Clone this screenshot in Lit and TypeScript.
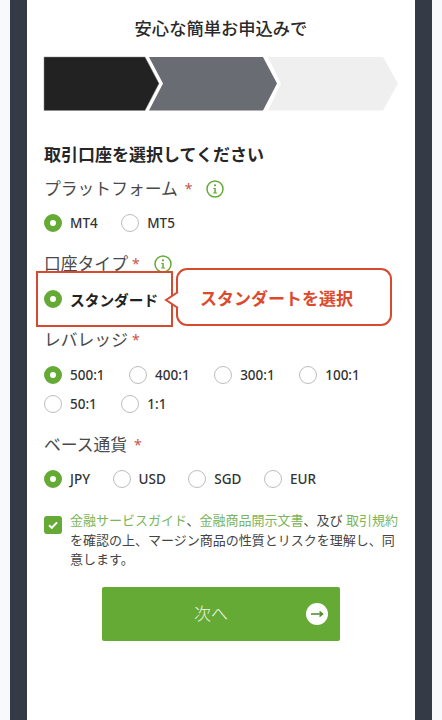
import { LitElement, html, css, svg } from "lit";
import { customElement } from "lit/decorators.js";

const info = html`<svg class="info" viewBox="0 0 18 18" aria-hidden="true">
  <circle cx="9" cy="9" r="8" fill="none" stroke="#64aa35" stroke-width="1.5"></circle>
  <circle cx="9" cy="5.3" r="1.1" fill="#64aa35"></circle>
  <path d="M7.3 7.9H9.8V12.4H11V13.5H7.1V12.4H8.3V9H7.3Z" fill="#64aa35"></path>
</svg>`;

type Opt = { t: string; on?: boolean };

@customElement("app-root")
export class AppRoot extends LitElement {
  static styles = css`
    :host { display: block; height: 720px; background: #f7f9fc; padding: 0 10px; box-sizing: border-box;
      font-family: "Noto Sans", "Noto Sans CJK JP", sans-serif; color: #333; }
    .band { background: #343a46; padding: 0 17px; height: 720px; }
    .panel { background: #fff; height: 720px; padding: 19px 17px 0; box-sizing: border-box; display: flex; flex-direction: column; overflow: hidden; }
    .title { height: 20px; line-height: 20px; text-align: center; font-size: 17.3px; font-weight: 500; color: #2a2a2a; }
    .steps { display: block; width: 356px; height: 55px; margin: 17px 0 0 -1px; flex: none; }
    .heading { margin-top: 32px; height: 24px; line-height: 24px; font-size: 17px; font-weight: 700; color: #262626; white-space: nowrap; }
    .label { display: flex; align-items: center; height: 24px; box-sizing: border-box; padding-top: 2px; line-height: 22px; font-size: 16.8px; color: #4a4a4a; white-space: pre; }
    .star { color: #c9544f; font-size: 14px; margin-left: 4px; }
    .star.wide { margin-left: 7px; }
    .info { width: 18px; height: 18px; flex: none; margin-left: 14px; }
    .radios { display: flex; flex-wrap: wrap; column-gap: 24.5px; row-gap: 5px; }
    .radios.tight { column-gap: 23.5px; }
    .radios.cur { column-gap: 22.5px; }
    .radio { display: flex; align-items: center; gap: 8px; height: 24px; font-size: 13.5px; font-weight: 500; color: #333; }
    .radio span { padding-bottom: 1px; }
    .dot { width: 18px; height: 18px; box-sizing: border-box; border-radius: 50%; border: 1px solid #bdbdbd; background: #fff; flex: none; }
    .dot.on { border: 6px solid #64aa35; }
    .m9 { margin-top: 9px; } .m11 { margin-top: 11px; } .m12 { margin-top: 12px; } .m16 { margin-top: 16px; }
    .typerow { display: flex; align-items: flex-start; margin: -4px 0 0 -8px; height: 56px; flex: none; }
    .box { width: 137px; height: 56px; box-sizing: border-box; border: 2px solid #d64a30; display: flex; align-items: center; padding-left: 6px; gap: 8px; font-size: 14.7px; font-weight: 700; color: #222; white-space: nowrap; }
    .callout { position: relative; margin: -3px 0 0 3px; width: 216px; height: 58px; box-sizing: border-box; border: 2px solid #d64a30; border-radius: 11px; display: flex; align-items: center; padding-left: 22px; font-size: 17px; font-weight: 700; color: #dc4a2e; background: #fff; white-space: nowrap; }
    .tail { position: absolute; left: -14px; top: 20px; width: 16px; height: 20px; }
    .agree { display: flex; gap: 8px; margin-top: 20px; }
    .check { width: 18px; height: 18px; margin-top: 5px; border-radius: 3px; background: #64aa35; flex: none; display: flex; align-items: center; justify-content: center; }
    .check svg { width: 10px; height: 8px; }
    .agree p { margin: 0; width: 329px; font-size: 13px; line-height: 19.5px; color: #444; flex: none; }
    .agree a { color: #7ab55c; text-decoration: none; }
    .next { margin: 17.5px 0 0 58px; width: 238px; height: 54px; flex: none; background: #64aa35; border-radius: 2px; display: flex; align-items: center; padding: 0 12px 0 14px; box-sizing: border-box; color: #eef6e8; font-size: 17px; font-weight: 300; }
    .next span { flex: 1; text-align: center; padding-bottom: 3px; }
    .next svg { width: 22px; height: 22px; flex: none; }
  `;

  private radios(opts: Opt[], cls = "m11") {
    return html`<div class="radios ${cls}">
      ${opts.map((o) => html`<div class="radio"><i class="dot ${o.on ? "on" : ""}"></i><span>${o.t}</span></div>`)}
    </div>`;
  }

  render() {
    return html`<div class="band"><div class="panel">
      <div class="title">安心な簡単お申込みで</div>
      <svg class="steps" viewBox="0 0 356 55">
        ${svg`<polygon points="1,1 102,1 116,27.5 102,54.5 1,54.5" fill="#222222" stroke="#8a8a8a" stroke-width=".5"></polygon>
        <polygon points="106,1 220,1 234,27.5 220,54.5 106,54.5 120,27.5" fill="#696c72"></polygon>
        <polygon points="225,1 340,1 355,27.5 340,54.5 225,54.5 238,27.5" fill="#efefef"></polygon>`}
      </svg>
      <div class="heading">取引口座を選択してください</div>
      <div class="label m9">プラットフォーム<span class="star wide">*</span>${info}</div>
      ${this.radios([{ t: "MT4", on: true }, { t: "MT5" }], "m11 tight")}
      <div class="label m16">口座タイプ<span class="star">*</span>${info}</div>
      <div class="typerow">
        <div class="box"><i class="dot on"></i>スタンダード</div>
        <div class="callout">
          <svg class="tail" viewBox="0 0 16 20"><path d="M14 2 2 10 14 18" fill="#fff" stroke="#d64a30" stroke-width="2"></path><rect x="14" y="3.2" width="2.5" height="13.6" fill="#fff"></rect></svg>
          スタンダートを選択
        </div>
      </div>
      <div class="label">レバレッジ<span class="star">*</span></div>
      ${this.radios([{ t: "500:1", on: true }, { t: "400:1" }, { t: "300:1" }, { t: "100:1" }, { t: "50:1" }, { t: "1:1" }], "m12")}
      <div class="label m16">ベース通貨<span class="star wide">*</span></div>
      ${this.radios([{ t: "JPY", on: true }, { t: "USD" }, { t: "SGD" }, { t: "EUR" }], "m11 cur")}
      <div class="agree">
        <div class="check"><svg viewBox="0 0 10 8"><path d="M1 4.2 3.8 6.8 9 1.4" fill="none" stroke="#fff" stroke-width="2"></path></svg></div>
        <p><a>金融サービスガイド</a>、<a>金融商品開示文書</a>、及び <a>取引規約</a>を確認の上、マージン商品の性質とリスクを理解し、同意します。</p>
      </div>
      <div class="next"><span>次へ</span>
        <svg viewBox="0 0 22 22"><circle cx="11" cy="11" r="11" fill="#fff"></circle><path d="M5 11H16M13.5 8.5 16.5 11 13.5 13.5" fill="none" stroke="#4f8a2a" stroke-width="1.6"></path></svg>
      </div>
    </div></div>`;
  }
}
